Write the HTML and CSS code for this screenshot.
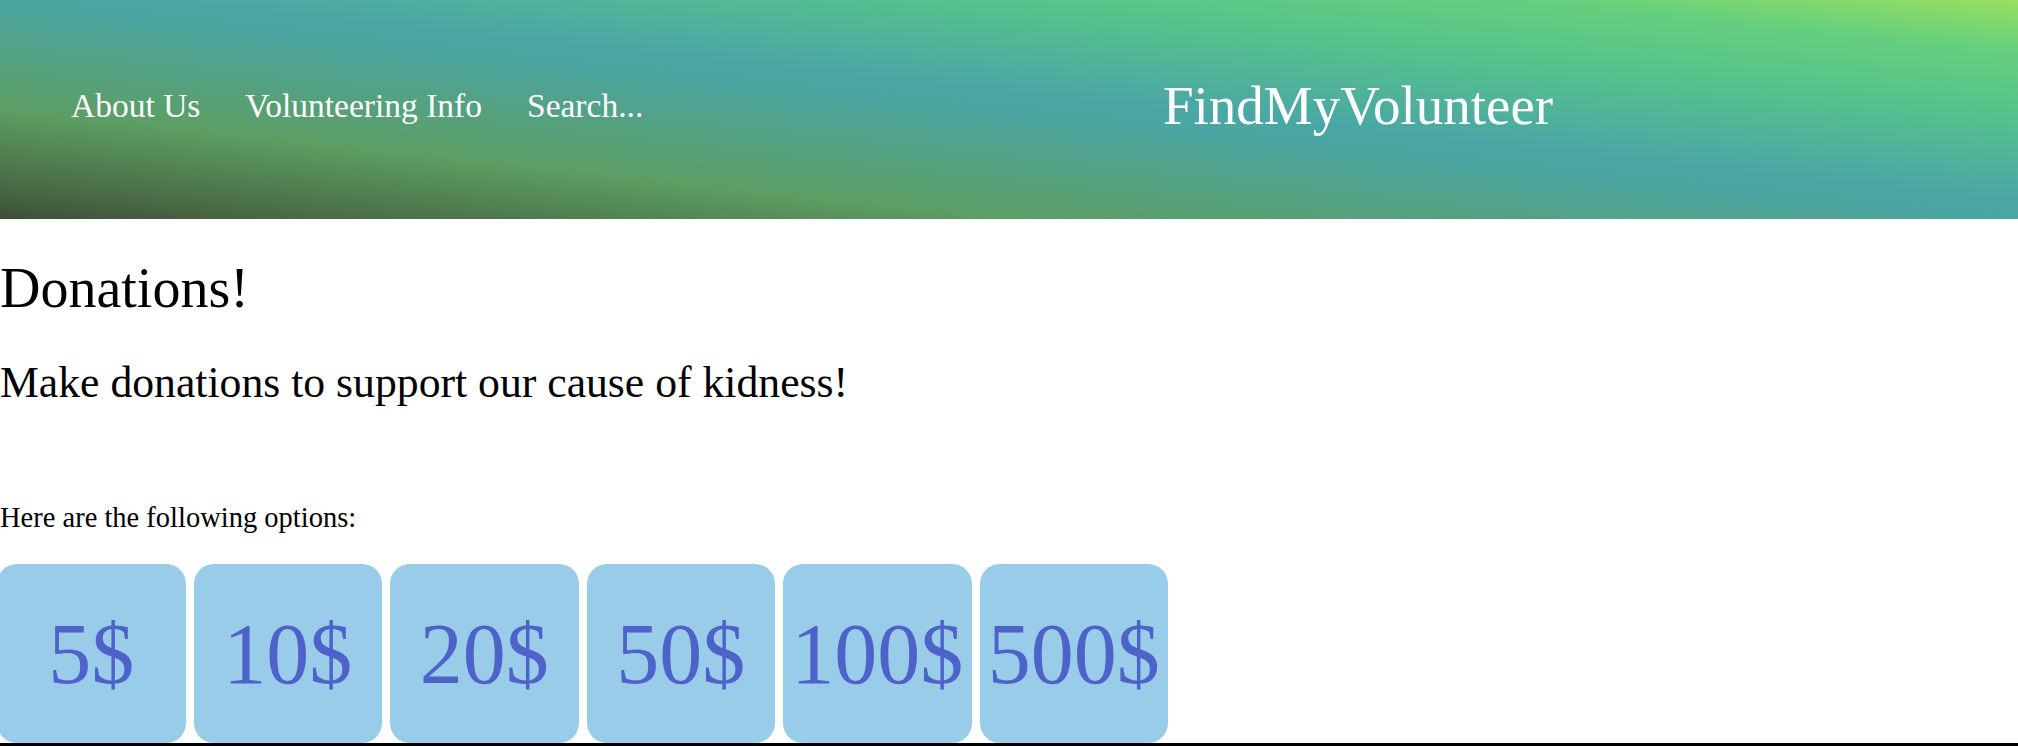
FILE: index.html
```html
<!DOCTYPE html>
<html lang="en">
<head>
<meta charset="utf-8">
<title>FindMyVolunteer - Donations</title>
<link rel="stylesheet" href="styles.css">
</head>
<body>
<header class="site-header">
  <nav class="nav">
    <a class="nav-link" href="#">About Us</a>
    <a class="nav-link" href="#">Volunteering Info</a>
    <a class="nav-link" href="#">Search...</a>
  </nav>
  <div class="brand">FindMyVolunteer</div>
</header>
<main class="content">
  <h1 class="title">Donations!</h1>
  <p class="lead">Make donations to support our cause of kidness!</p>
  <p class="note">Here are the following options:</p>
  <div class="options">
    <button class="option">5$</button>
    <button class="option">10$</button>
    <button class="option">20$</button>
    <button class="option">50$</button>
    <button class="option">100$</button>
    <button class="option">500$</button>
  </div>
  <div class="rule"></div>
</main>
</body>
</html>
```
FILE: styles.css
```css
html, body {
  margin: 0;
  padding: 0;
}
body {
  font-family: "Liberation Serif", "Times New Roman", serif;
  color: #000;
  background: #fff;
  overflow: hidden;
}
.site-header {
  height: 219px;
  box-sizing: border-box;
  padding-bottom: 8px;
  display: grid;
  grid-template-columns: 1163px auto;
  align-items: center;
  background: linear-gradient(to top right,
    #3d4f38 0%,
    #4a6b45 8%,
    #5c9e64 25%,
    #4ba5a2 50%,
    #4aa6a6 54%,
    #57c38a 75%,
    #65cf7e 88%,
    #98df5f 100%);
}
.nav {
  display: flex;
  gap: 45px;
  padding-left: 71px;
}
.nav-link {
  color: #fff;
  text-decoration: none;
  font-size: 33.5px;
}
.brand {
  color: #fff;
  font-size: 55px;
}
.content {
  margin: 0;
}
.title {
  margin: 37px 0 0;
  font-size: 56px;
  line-height: 64px;
  font-weight: normal;
}
.lead {
  margin: 38px 0 0;
  font-size: 43.7px;
  line-height: 48px;
}
.note {
  margin: 96px 0 0;
  font-size: 28.5px;
  line-height: 32px;
}
.options {
  display: flex;
  gap: 8px;
  margin: 30px 0 0 -3px;
}
.option {
  width: 188.5px;
  height: 179px;
  border: none;
  border-radius: 20px;
  background: #98cce8;
  color: #4f62c9;
  font-family: "Liberation Serif", "Times New Roman", serif;
  font-size: 86px;
  padding: 0;
  display: flex;
  align-items: center;
  justify-content: center;
  white-space: nowrap;
  overflow: visible;
}
.rule {
  border-top: 3px solid #000;
  height: 20px;
}
```
